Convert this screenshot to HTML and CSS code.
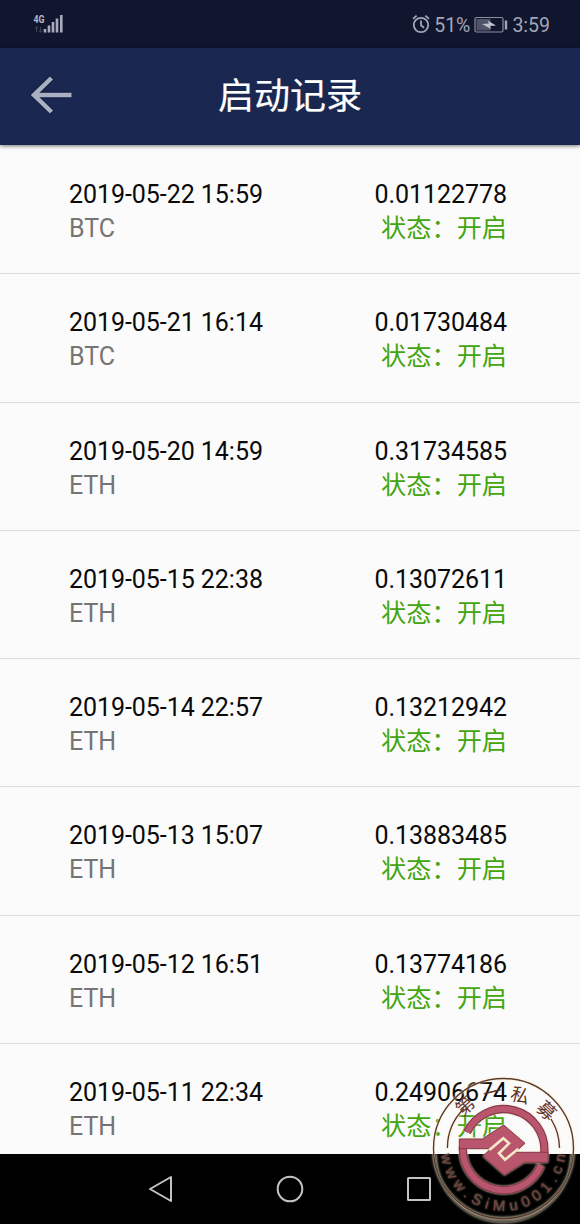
FILE: index.html
```html
<!DOCTYPE html>
<html lang="zh-CN">
<head>
    <meta charset="UTF-8">
    <meta name="viewport" content="width=device-width, initial-scale=1.0">
    <title>启动记录</title>
    <link rel="stylesheet" href="styles.css">
</head>
<body>
    <div class="status-bar">
        <svg class="signal" width="32" height="22" viewBox="0 0 32 22">
            <text class="network" x="0.500" y="10" textLength="11" lengthAdjust="spacingAndGlyphs">4G</text>
            <path class="data-arrows" d="M3.500 19v-5M2 15.500l1.500-2 1.500 2M7.500 14v5M6 17.500l1.500 2 1.500-2"/>
            <path class="bars" d="M12 19.500v-3.500M16 19.500v-7M20 19.500v-10.500M24 19.500v-14M28.300 19.500v-17.500"/>
        </svg>
        <div class="status-right">
            <svg class="alarm" width="18" height="20" viewBox="0 0 18 20">
                <circle cx="9" cy="11" r="7.200"/>
                <path d="M9 6.500v4.800l3 2.500M1 4.800l3.600-3.200M17 4.800l-3.600-3.200"/>
            </svg>
            <span class="percent">51%</span>
            <svg class="battery" width="34" height="18" viewBox="0 0 34 18">
                <rect class="battery-case" x="1" y="1.500" width="28" height="14.500" rx="1.500"/>
                <rect class="battery-level" x="2.500" y="3" width="14" height="11.500"/>
                <path class="battery-tip" d="M32 4.500v9"/>
                <path class="bolt" d="M8 8l7-0.500-1.500-3L22 9.500l-6 0.500 1 3z"/>
            </svg>
            <span class="time">3:59</span>
        </div>
    </div>

    <div class="header">
        <svg class="back" width="46" height="42" viewBox="0 0 46 42">
            <path d="M23.500 4L6 21l17.500 17M6 21h37.500"/>
        </svg>
        <h1>启动记录</h1>
    </div>

    <div class="records">
        <div class="record">
            <div class="info">
                <p class="date">2019-05-22 15:59</p>
                <p class="coin">BTC</p>
            </div>
            <div class="result">
                <p class="amount">0.01122778</p>
                <p class="state">状态：开启</p>
            </div>
        </div>
        <div class="record">
            <div class="info">
                <p class="date">2019-05-21 16:14</p>
                <p class="coin">BTC</p>
            </div>
            <div class="result">
                <p class="amount">0.01730484</p>
                <p class="state">状态：开启</p>
            </div>
        </div>
        <div class="record">
            <div class="info">
                <p class="date">2019-05-20 14:59</p>
                <p class="coin">ETH</p>
            </div>
            <div class="result">
                <p class="amount">0.31734585</p>
                <p class="state">状态：开启</p>
            </div>
        </div>
        <div class="record">
            <div class="info">
                <p class="date">2019-05-15 22:38</p>
                <p class="coin">ETH</p>
            </div>
            <div class="result">
                <p class="amount">0.13072611</p>
                <p class="state">状态：开启</p>
            </div>
        </div>
        <div class="record">
            <div class="info">
                <p class="date">2019-05-14 22:57</p>
                <p class="coin">ETH</p>
            </div>
            <div class="result">
                <p class="amount">0.13212942</p>
                <p class="state">状态：开启</p>
            </div>
        </div>
        <div class="record">
            <div class="info">
                <p class="date">2019-05-13 15:07</p>
                <p class="coin">ETH</p>
            </div>
            <div class="result">
                <p class="amount">0.13883485</p>
                <p class="state">状态：开启</p>
            </div>
        </div>
        <div class="record">
            <div class="info">
                <p class="date">2019-05-12 16:51</p>
                <p class="coin">ETH</p>
            </div>
            <div class="result">
                <p class="amount">0.13774186</p>
                <p class="state">状态：开启</p>
            </div>
        </div>
        <div class="record">
            <div class="info">
                <p class="date">2019-05-11 22:34</p>
                <p class="coin">ETH</p>
            </div>
            <div class="result">
                <p class="amount">0.24906674</p>
                <p class="state">状态：开启</p>
            </div>
        </div>
    </div>

    <div class="nav-bar">
        <svg width="28" height="28" viewBox="0 0 28 28"><path d="M3 14L24 2v24z"/></svg>
        <svg width="28" height="28" viewBox="0 0 28 28"><circle cx="14" cy="14" r="12.300"/></svg>
        <svg width="28" height="28" viewBox="0 0 28 28"><rect x="3" y="3" width="22" height="22" rx="0.500"/></svg>
    </div>

    <!-- watermark stamp -->
    <svg class="stamp" width="155" height="154" viewBox="0 0 155 154">
        <defs>
            <path id="bottomArc" d="M16 78.500A62.500 62.500 0 0 0 141 78.500"/>
        </defs>
        <g class="rims">
            <circle cx="78.500" cy="78.500" r="70"/>
            <path class="rim-shade" d="M10.500 84A68 68 0 0 0 146.500 84"/>
            <path d="M22.400 78A56 56 0 0 1 39 38.500"/>
            <path d="M134.500 78A56 56 0 0 0 126 49"/>
        </g>
        <g class="stamp-name">
            <text transform="translate(40.500 36.500) rotate(-41)" y="6">第</text>
            <text transform="translate(67.500 23) rotate(-14)" y="6">一</text>
            <text transform="translate(95 26) rotate(15)" y="6">私</text>
            <text transform="translate(121 41) rotate(44)" y="6">募</text>
        </g>
        <text class="stamp-url"><textPath href="#bottomArc" startOffset="6" textLength="184">www.SiMu001.cn</textPath></text>
        <g class="emblem" transform="translate(30 30) scale(0.3333)">
            <path class="ring-edge" d="M36 97A122 122 0 0 1 268 157"/>
            <path class="ring-edge" d="M24 140A122 122 0 0 0 258 196"/>
            <path class="ring" d="M36 97A122 122 0 0 1 268 157"/>
            <path class="ring" d="M24 140A122 122 0 0 0 258 196"/>
            <path class="knot" d="M13 117H82L146 75L210 130L180 157H280L278 187H208L148 225L84 168L108 146H13z"/>
            <path class="channel" d="M103 150L145 115L162 130L132 160L150 179L190 146"/>
        </g>
    </svg>
</body>
</html>
```
FILE: styles.css
```css
body {
    margin: 0;
    width: 580px;
    height: 1224px;
    display: flex;
    flex-direction: column;
    position: relative;
    overflow: hidden;
    background-color: #fbfbfb;
    font-family: Roboto, "Noto Sans CJK SC", sans-serif;
}
h1, p {
    margin: 0;
    font-weight: normal;
}
svg {
    flex: none;
    fill: none;
}
.status-bar {
    flex: none;
    height: 48px;
    box-sizing: border-box;
    padding: 0 30px 0 33px;
    display: flex;
    align-items: center;
    justify-content: space-between;
    background-color: #11162f;
    color: #a3a6b5;
    font-size: 20px;
}
.network {
    font-size: 10.5px;
    font-weight: bold;
    fill: #b4b7c4;
}
.data-arrows {
    stroke: #3d4157;
}
.bars {
    stroke: #a9acba;
    stroke-width: 2.6;
}
.status-right {
    display: flex;
    align-items: center;
    padding-top: 2px;
}
.alarm {
    margin-right: 4px;
    margin-bottom: 2px;
    stroke: #a3a6b5;
    stroke-width: 1.8;
}
.percent {
    font-size: 19.5px;
}
.battery {
    margin: 0 4px 1px 4px;
}
.battery-case {
    stroke: #8b8e9e;
    stroke-width: 1.2;
}
.battery-level {
    fill: #505467;
}
.battery-tip {
    stroke: #a3a6b5;
    stroke-width: 2.4;
}
.bolt {
    fill: #c0c2cc;
}
.time {
    font-size: 19.5px;
}
.header {
    flex: none;
    height: 97px;
    box-sizing: border-box;
    padding: 0 28px;
    display: grid;
    grid-template-columns: 46px 1fr 46px;
    align-items: center;
    background-color: #1a2750;
    box-shadow: 0 1px 4px rgba(0, 0, 0, 0.55);
    z-index: 1;
}
.back {
    stroke: #a9b0c2;
    stroke-width: 4.5;
    margin-bottom: 4px;
    filter: drop-shadow(0 0 1px #0d1430);
}
.header h1 {
    padding-top: 1px;
    text-align: center;
    font-size: 36px;
    line-height: 50px;
    color: #fff;
    -webkit-text-stroke: 0.2px #fff;
}
.records {
    flex: 1;
    min-height: 0;
    padding-top: 1px;
    overflow: hidden;
}
.record {
    height: 128.3px;
    box-sizing: border-box;
    padding: 32px 73px 0 69px;
    display: flex;
    justify-content: space-between;
    border-bottom: 1px solid #dcdcdc;
    font-size: 25px;
    line-height: 34px;
    color: #0a0a0a;
}
.coin {
    color: #757575;
}
.date, .amount {
    letter-spacing: -0.05px;
}
.result {
    text-align: right;
}
.state {
    font-size: 25.2px;
    color: #43a510;
}
.nav-bar {
    flex: none;
    height: 70px;
    display: flex;
    justify-content: center;
    align-items: center;
    gap: 101px;
    background-color: #000;
}
.nav-bar svg {
    stroke: #c4c4c4;
    stroke-width: 2;
    stroke-linejoin: round;
}
.stamp {
    position: absolute;
    left: 425px;
    top: 1070px;
}
.rims {
    stroke: #5b3a2e;
    stroke-width: 1.4;
    filter: drop-shadow(0 0 1px #fff3d8) drop-shadow(0 0 1.5px rgba(255, 240, 210, 0.4));
}
.rims .rim-shade {
    stroke: #5a5042;
    stroke-width: 1;
}
.stamp-name {
    font-family: "Noto Sans CJK SC", sans-serif;
    font-size: 18.5px;
    text-anchor: middle;
    fill: #633327;
}
.stamp-url {
    font-family: "Liberation Sans", sans-serif;
    font-size: 15px;
    fill: #75473f;
    filter: drop-shadow(0 0 1px rgba(163, 150, 125, 0.8));
}
.emblem {
    filter: drop-shadow(0 0 3px #efe2bd);
}
.ring-edge {
    stroke: #85394a;
    stroke-width: 25;
}
.ring {
    stroke: #b9566d;
    stroke-width: 18;
}
.knot {
    fill: #b9566d;
    stroke: #85394a;
    stroke-width: 3;
}
.channel {
    stroke: #f4e8c8;
    stroke-width: 8;
}
```
